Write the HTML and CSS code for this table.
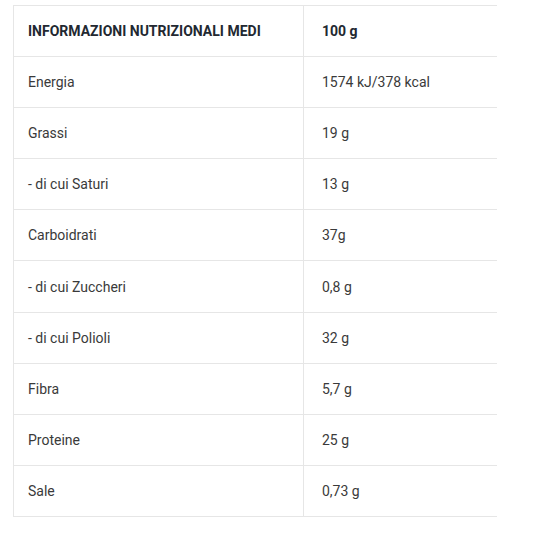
FILE: index.html
```html
<!DOCTYPE html>
<html lang="it">
<head>
<meta charset="utf-8">
<link rel="stylesheet" href="styles.css">
</head>
<body>
<table class="nutri">
  <thead>
    <tr><th class="label">INFORMAZIONI NUTRIZIONALI MEDI</th><th class="value">100 g</th></tr>
  </thead>
  <tbody>
    <tr><td class="label">Energia</td><td class="value">1574 kJ/378 kcal</td></tr>
    <tr><td class="label">Grassi</td><td class="value">19 g</td></tr>
    <tr><td class="label">- di cui Saturi</td><td class="value">13 g</td></tr>
    <tr><td class="label">Carboidrati</td><td class="value">37g</td></tr>
    <tr><td class="label">- di cui Zuccheri</td><td class="value">0,8 g</td></tr>
    <tr><td class="label">- di cui Polioli</td><td class="value">32 g</td></tr>
    <tr><td class="label">Fibra</td><td class="value">5,7 g</td></tr>
    <tr><td class="label">Proteine</td><td class="value">25 g</td></tr>
    <tr><td class="label">Sale</td><td class="value">0,73 g</td></tr>
  </tbody>
</table>
</body>
</html>
```
FILE: styles.css
```css
html, body {
  margin: 0;
  padding: 0;
  background: #ffffff;
}
body {
  font-family: Roboto, "Liberation Sans", Arial, sans-serif;
  font-size: 14px;
  color: #3a3a3a;
  padding: 5px 0 0 13px;
}
.nutri {
  border-collapse: collapse;
  width: 484px;
  table-layout: fixed;
}
.nutri th, .nutri td {
  height: 50.1px;
  padding: 0;
  text-align: left;
  vertical-align: middle;
  border-top: 1px solid #e6e6e6;
  border-bottom: 1px solid #e6e6e6;
}
.nutri .label {
  width: 275px;
  padding-left: 14px;
  border-left: 1px solid #e6e6e6;
  border-right: 1px solid #e6e6e6;
}
.nutri .value {
  padding-left: 18px;
}
.nutri th {
  font-weight: 700;
  color: #222831;
  font-size: 14px;
}
```
